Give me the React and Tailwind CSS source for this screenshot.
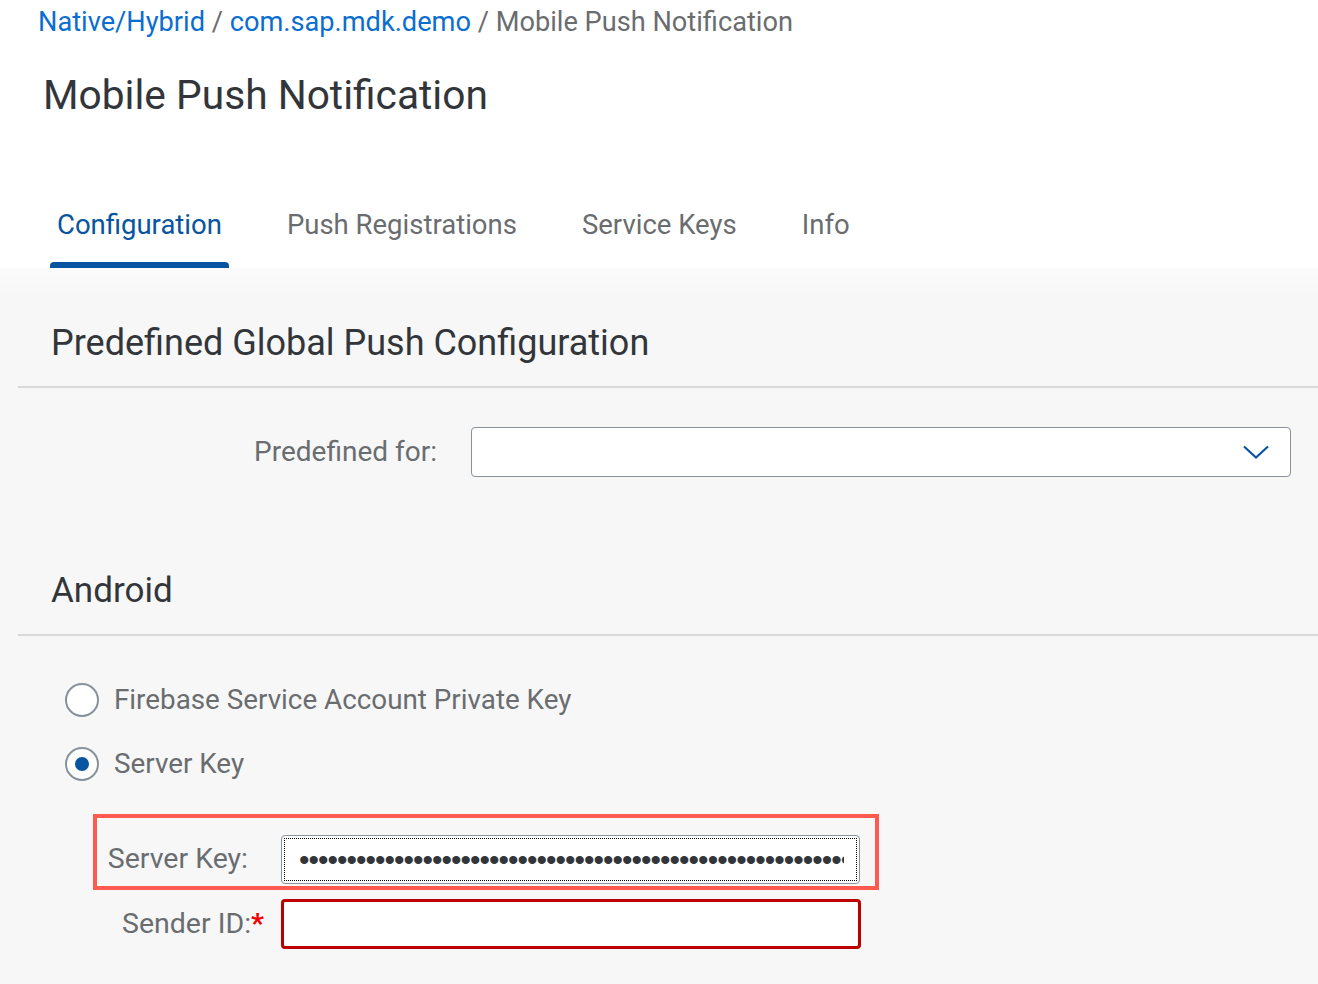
import React from "react";

const tabs = ["Configuration", "Push Registrations", "Service Keys", "Info"];

const Radio = ({ checked, label }) => (
    <div className="flex items-center h-[40px] ml-[65px]">
        <div className="w-[34px] h-[34px] rounded-full border-2 border-[#89919a] bg-white flex items-center justify-center">
            {checked && <div className="w-[14px] h-[14px] rounded-full bg-[#0854a0]" />}
        </div>
        <span className="ml-[15px] text-[27.8px] text-[#6a6d70]">{label}</span>
    </div>
);

const App = () => {
    return (
        <div className="min-h-screen bg-[#f7f7f7] font-['Roboto',sans-serif]">
            <header className="bg-white h-[268px] flex flex-col">
                <div className="h-[44px] flex items-center pl-[38px] text-[27.2px] text-[#6a6d70] whitespace-pre">
                    <span className="text-[#0a6ed1]">Native/Hybrid</span>
                    <span> / </span>
                    <span className="text-[#0a6ed1]">com.sap.mdk.demo</span>
                    <span> / </span>
                    <span>Mobile Push Notification</span>
                </div>
                <div className="h-[104px] flex items-center pl-[43px]">
                    <h1 className="text-[40.7px] text-[#32363a]">Mobile Push Notification</h1>
                </div>
                <nav className="h-[120px] flex items-end gap-[51px] pl-[50px]">
                    {tabs.map((t, i) => (
                        <div key={t} className="flex flex-col">
                            <span className={`px-[7px] h-[34px] leading-[34px] text-[27.5px] ${i === 0 ? "text-[#0854a0]" : "text-[#6a6d70]"}`}>{t}</span>
                            <div className={`mt-[20px] h-[6px] rounded-t-[4px] ${i === 0 ? "bg-[#0854a0]" : "bg-transparent"}`} />
                        </div>
                    ))}
                </nav>
            </header>

            <div className="h-[32px] bg-gradient-to-b from-[#fbfbfb] to-[#f7f7f7]" />

            <section>
                <div className="h-[86px] flex items-center pl-[51px]">
                    <h2 className="text-[36px] text-[#32363a]">Predefined Global Push Configuration</h2>
                </div>
                <div className="ml-[18px] h-[2px] bg-[#d9d9d9]" />

                <div className="mt-[39px] flex items-center h-[50px]">
                    <label className="w-[437px] text-right text-[28px] text-[#6a6d70]">Predefined for:</label>
                    <div className="ml-[34px] w-[820px] h-[50px] bg-white border border-[#89919a] rounded-[4px] flex items-center justify-end pr-[21px]">
                        <svg width="26" height="14" viewBox="0 0 26 14" fill="none">
                            <path d="M1 1.5 L13 12.5 L25 1.5" stroke="#0854a0" strokeWidth="2.2" />
                        </svg>
                    </div>
                </div>
            </section>

            <section className="mt-[71px]">
                <div className="h-[86px] flex items-center pl-[51px]">
                    <h2 className="text-[35px] text-[#32363a]">Android</h2>
                </div>
                <div className="ml-[18px] h-[2px] bg-[#d9d9d9]" />

                <div className="mt-[44px]">
                    <Radio label="Firebase Service Account Private Key" />
                </div>
                <div className="mt-[24px]">
                    <Radio checked label="Server Key" />
                </div>

                <div className="mt-[30px] ml-[93px] w-[786px] border-4 border-[#ff5a4f] pt-[17px] pb-[2px] flex items-center">
                    <label className="w-[151px] text-right text-[28.5px] text-[#6a6d70]">Server Key:</label>
                    <div className="ml-[33px] w-[579px] h-[49px] bg-white border border-[#89919a] rounded-[4px] p-[2px]">
                        <div className="h-full border border-dotted border-black flex items-center pl-[14px] pr-[12px] overflow-hidden">
                            <input
                                type="password"
                                readOnly
                                value={"x".repeat(80)}
                                className="w-full bg-transparent outline-none text-[30px] tracking-[-1px] text-[#32363a] font-['Liberation_Sans',sans-serif]"
                            />
                        </div>
                    </div>
                </div>

                <div className="mt-[9px] ml-[97px] flex items-center">
                    <label className="w-[167px] text-right text-[28.5px] text-[#6a6d70]">
                        Sender ID:<span className="text-[#e00] font-bold">*</span>
                    </label>
                    <div className="ml-[17px] w-[580px] h-[50px] bg-white border-[3px] border-[#bb0000] rounded-[4px]" />
                </div>
            </section>
        </div>
    );
};

export default App;
